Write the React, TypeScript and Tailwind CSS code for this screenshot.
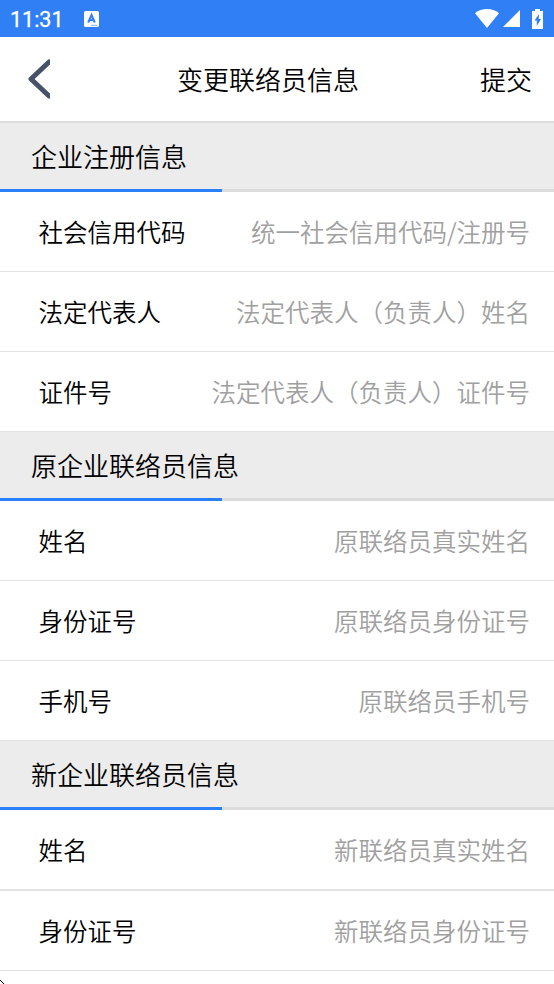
import React from 'react';

type Field = { label: string; placeholder: string; thick?: boolean };
type Section = { title: string; fields: Field[] };

const sections: Section[] = [
  {
    title: '企业注册信息',
    fields: [
      { label: '社会信用代码', placeholder: '统一社会信用代码/注册号' },
      { label: '法定代表人', placeholder: '法定代表人（负责人）姓名' },
      { label: '证件号', placeholder: '法定代表人（负责人）证件号' },
    ],
  },
  {
    title: '原企业联络员信息',
    fields: [
      { label: '姓名', placeholder: '原联络员真实姓名' },
      { label: '身份证号', placeholder: '原联络员身份证号' },
      { label: '手机号', placeholder: '原联络员手机号' },
    ],
  },
  {
    title: '新企业联络员信息',
    fields: [
      { label: '姓名', placeholder: '新联络员真实姓名', thick: true },
      { label: '身份证号', placeholder: '新联络员身份证号' },
    ],
  },
];

const StatusBar: React.FC = () => (
  <div className="flex h-[37px] items-center bg-[#307ff5] pl-[10px] pr-[10px] text-white">
    <span className="w-[74px] pt-[2px] font-[Roboto] text-[21.5px] font-normal leading-none [-webkit-text-stroke:0.3px_white]">11:31</span>
    <svg width="15" height="16" viewBox="0 0 15 16">
      <rect width="15" height="16" rx="1.5" fill="#fff" />
      <path d="M4.2 11.5 7.5 4l3.3 7.5M5.5 9h4" fill="none" stroke="#307ff5" strokeWidth="2" />
      <path d="M7.5 14.3h6" stroke="#307ff5" strokeWidth="1" strokeDasharray="1.2 .8" />
    </svg>
    <div className="ml-auto flex items-center">
      <svg width="24" height="19" viewBox="0 0 24 19">
        <path d="M0 4.2C7-1.4 17-1.4 24 4.2L12 19Z" fill="#fff" />
      </svg>
      <svg className="ml-[4px]" width="17" height="17" viewBox="0 0 17 17">
        <path d="M17 0v17H0Z" fill="#fff" />
      </svg>
      <svg className="ml-[12px] mr-px" width="11" height="20" viewBox="0 0 11 20">
        <path d="M3 0h5v2h3v18H0V2h3Z" fill="#fff" />
        <path d="M7 5 2.5 11.5h2.3V17l4.2-7H6.7Z" fill="#307ff5" />
      </svg>
    </div>
  </div>
);

const Header: React.FC = () => (
  <div className="grid h-[86px] grid-cols-[1fr_auto_1fr] items-center border-b-2 border-[#dedede] bg-white pl-[4px] pr-[22px] text-[26px]">
    <svg className="ml-6" width="22" height="40" viewBox="0 0 22 40">
      <path d="M21 3 3 20l18 17" fill="none" stroke="#455268" strokeWidth="5" strokeLinecap="round" strokeLinejoin="round" />
    </svg>
    <h1>变更联络员信息</h1>
    <button className="justify-self-end">提交</button>
  </div>
);

const SectionTitle: React.FC<{ title: string }> = ({ title }) => (
  <div className="bg-[#ececec]">
    <h2 className="flex h-[66px] items-center pl-[31px] text-[26px]">{title}</h2>
    <div className="h-[3px] bg-[#dcdcdc]">
      <div className="h-full w-2/5 bg-[#2a80fb]" />
    </div>
  </div>
);

const Row: React.FC<{ field: Field }> = ({ field }) => (
  <div
    className={`flex items-center justify-between border-[#e2e2e2] pl-[38.5px] pr-[24px] pt-[2px] text-[24.5px] ${
      field.thick ? 'h-[81px] border-b-2' : 'h-[80px] border-b'
    }`}
  >
    <span>{field.label}</span>
    <span className="text-[#a0a0a0]">{field.placeholder}</span>
  </div>
);

export default function App() {
  return (
    <div className="relative h-[984px] w-[554px] overflow-hidden bg-white font-['Noto_Sans_CJK_SC',sans-serif] font-[350] leading-none text-black [&_button]:font-[350] [&_h1]:font-[350] [&_h2]:font-[350]">
      <StatusBar />
      <Header />
      {sections.map((section) => (
        <section key={section.title}>
          <SectionTitle title={section.title} />
          {section.fields.map((field) => (
            <Row key={field.label} field={field} />
          ))}
        </section>
      ))}
      {/* pointer tip at the screen edge */}
      <svg className="absolute bottom-0 left-0" width="4" height="4" viewBox="0 0 4 4" shapeRendering="crispEdges">
        <path d="M0 0h1v1h1v1h1v1h1v1H3V3H2V2H1V1H0Z" fill="#000" />
      </svg>
    </div>
  );
}
